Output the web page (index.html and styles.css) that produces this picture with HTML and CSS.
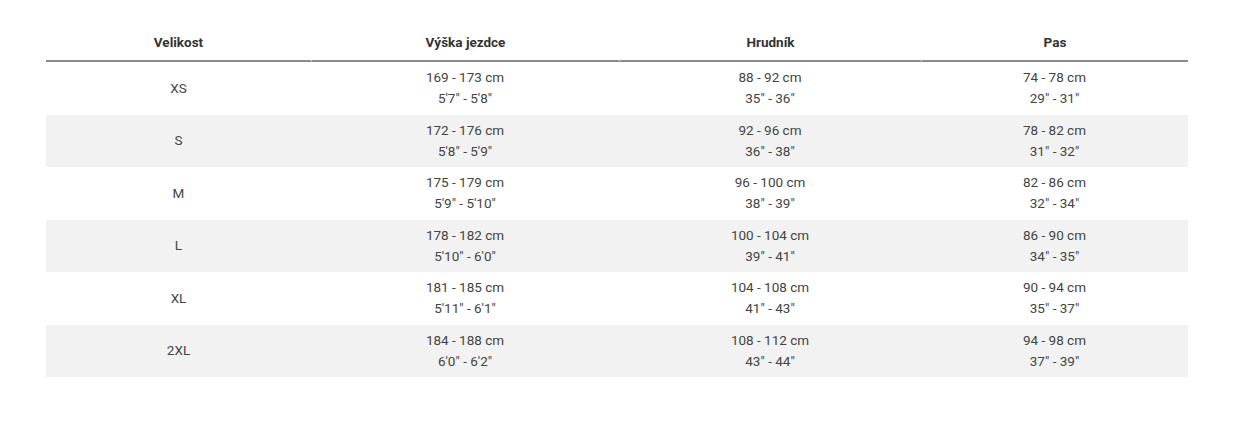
FILE: index.html
```html
<!DOCTYPE html>
<html lang="cs">
<head>
<meta charset="utf-8">
<title>Tabulka velikostí</title>
<link rel="stylesheet" href="styles.css">
</head>
<body>
<div class="wrap">
<table class="sizes">
<colgroup>
<col class="c1"><col class="c2"><col class="c3"><col class="c4">
</colgroup>
<thead>
<tr><th>Velikost</th><th>Výška jezdce</th><th>Hrudník</th><th>Pas</th></tr>
</thead>
<tbody>
<tr><td>XS</td><td>169 - 173 cm<br>5'7" - 5'8"</td><td>88 - 92 cm<br>35" - 36"</td><td>74 - 78 cm<br>29" - 31"</td></tr>
<tr><td>S</td><td>172 - 176 cm<br>5'8" - 5'9"</td><td>92 - 96 cm<br>36" - 38"</td><td>78 - 82 cm<br>31" - 32"</td></tr>
<tr><td>M</td><td>175 - 179 cm<br>5'9" - 5'10"</td><td>96 - 100 cm<br>38" - 39"</td><td>82 - 86 cm<br>32" - 34"</td></tr>
<tr><td>L</td><td>178 - 182 cm<br>5'10" - 6'0"</td><td>100 - 104 cm<br>39" - 41"</td><td>86 - 90 cm<br>34" - 35"</td></tr>
<tr><td>XL</td><td>181 - 185 cm<br>5'11" - 6'1"</td><td>104 - 108 cm<br>41" - 43"</td><td>90 - 94 cm<br>35" - 37"</td></tr>
<tr><td>2XL</td><td>184 - 188 cm<br>6'0" - 6'2"</td><td>108 - 112 cm<br>43" - 44"</td><td>94 - 98 cm<br>37" - 39"</td></tr>
</tbody>
</table>
</div>
</body>
</html>
```
FILE: styles.css
```css
html, body {
  margin: 0;
  padding: 0;
  background: #fff;
}
body {
  font-family: Roboto, "Liberation Sans", Arial, sans-serif;
  color: #444;
}
.wrap {
  padding: 24px 46px 0 46px;
}
.sizes {
  width: 1142px;
  border-collapse: separate;
  border-spacing: 0;
  table-layout: fixed;
}
.c1 { width: 265px; }
.c2 { width: 308px; }
.c3 { width: 302px; }
.c4 { width: 267px; }
.sizes th {
  font-size: 13.5px;
  font-weight: 700;
  color: #333;
  text-align: center;
  height: 36px;
  padding: 0;
  line-height: 36px;
  border-bottom: 2px solid #8a8a8a;
}
.sizes th + th {
  border-left: 1px solid #fff;
}
.sizes td {
  font-size: 13.5px;
  line-height: 21px;
  text-align: center;
  height: 52.5px;
  padding: 0;
  box-sizing: border-box;
}
.sizes tbody tr:nth-child(even) td {
  background: #f2f2f2;
}
```
